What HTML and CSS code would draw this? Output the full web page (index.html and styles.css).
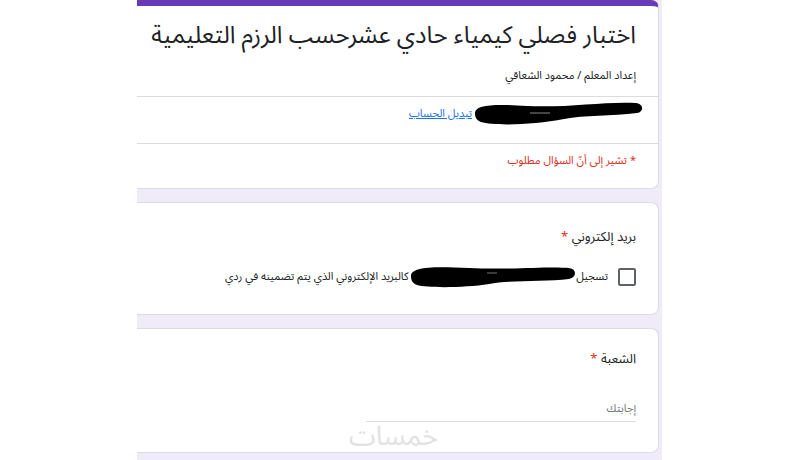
FILE: index.html
```html
<!DOCTYPE html>
<html lang="ar" dir="rtl">
<head>
<meta charset="utf-8">
<title>اختبار فصلي كيمياء حادي عشر</title>
<link rel="stylesheet" href="styles.css">
</head>
<body>
<div class="page">
  <div class="form">
    <section class="card card-top">
      <div class="header">
        <h1 class="title">اختبار فصلي كيمياء حادي عشرحسب الرزم التعليمية</h1>
        <p class="subtitle">إعداد المعلم / محمود الشعاقي</p>
      </div>
      <div class="account">
        <svg class="blob blob-account" viewBox="0 0 172 26" aria-hidden="true">
          <path d="M3,13 C3,4 25,4 55,6 C95,8 135,1 164,3 C172,4 172,12 165,13 C140,16 112,15 92,19 C62,25 22,26 9,22 C4,20 3,17 3,13 Z" fill="#000"/>
          <path d="M58,13 L78,13" stroke="#888" stroke-width="1"/>
        </svg>
        <a class="switch" href="#">تبديل الحساب</a>
      </div>
      <div class="required-note">* تشير إلى أنّ السؤال مطلوب</div>
    </section>

    <section class="card">
      <div class="q-title">بريد إلكتروني <span class="star">*</span></div>
      <label class="check-row">
        <span class="checkbox"></span>
        <span class="check-label">تسجيل <span class="blob-wrap"><svg class="blob blob-email" viewBox="0 0 168 24" aria-hidden="true">
          <path d="M2,12 C2,3 22,2 60,4 C100,6 140,2 160,4 C168,5 168,13 160,15 C135,18 100,16 80,20 C55,24 18,24 8,21 C3,19 2,16 2,12 Z" fill="#000"/>
          <path d="M78,9 L88,9" stroke="#777" stroke-width="1"/>
        </svg></span> كالبريد الإلكتروني الذي يتم تضمينه في ردي</span>
      </label>
    </section>

    <section class="card card-last">
      <div class="q-title">الشعبة <span class="star">*</span></div>
      <div class="answer">إجابتك</div>
      <div class="watermark">خمسات</div>
    </section>
  </div>
</div>
</body>
</html>
```

FILE: styles.css
```css
* { box-sizing: border-box; }

html, body {
  margin: 0;
  padding: 0;
  background: #ffffff;
}

body {
  font-family: "Noto Sans Arabic", "DejaVu Sans", "Liberation Sans", sans-serif;
  color: #202124;
  width: 800px;
  height: 460px;
  overflow: hidden;
}

.page {
  direction: ltr;
  display: flex;
  height: 460px;
}

.form {
  direction: rtl;
  margin-left: 137px;
  width: 525px;
  background: #f0ebf8;
  padding: 0 3px 0 0;
  display: flex;
  flex-direction: column;
  gap: 13px;
}

.card {
  position: relative;
  background: #ffffff;
  border: 1px solid #dadce0;
  border-left: none;
  border-radius: 0 8px 8px 0;
  padding: 25px 22px 28px 22px;
}

.card-top {
  border-top: 6px solid #673ab7;
  border-radius: 0 8px 8px 0;
  padding: 0;
}

.header {
  padding: 13px 22px 12px;
  border-bottom: 1px solid #dadce0;
}

.title {
  margin: 0;
  font-size: 24px;
  font-weight: normal;
  line-height: 34px;
  color: #202124;
  white-space: nowrap;
}

.subtitle {
  margin: 15px 0 0;
  font-size: 11px;
  line-height: 16px;
  color: #202124;
}

.account {
  height: 47px;
  padding: 3px 14px 0 22px;
  display: flex;
  align-items: flex-start;
  border-bottom: 1px solid #dadce0;
}

.blob-account {
  width: 172px;
  height: 26px;
  display: block;
}

.switch {
  font-size: 11px;
  line-height: 16px;
  margin-top: 6px;
  color: #1a73e8;
  text-decoration: underline;
}

.required-note {
  padding: 9px 22px 19px;
  font-size: 11px;
  line-height: 16px;
  color: #d93025;
}

.q-title {
  font-size: 13px;
  line-height: 18px;
  color: #202124;
}

.star {
  color: #d93025;
}

.check-row {
  display: flex;
  align-items: center;
  gap: 10px;
  margin-top: 22px;
}

.checkbox {
  width: 18px;
  height: 18px;
  border: 2px solid #5f6368;
  border-radius: 2px;
  flex: none;
}

.check-label {
  font-size: 11px;
  line-height: 16px;
  color: #202124;
  white-space: nowrap;
}

.blob-wrap {
  display: inline-block;
  width: 162px;
  height: 16px;
  position: relative;
  vertical-align: middle;
}

.blob-email {
  position: absolute;
  top: -5px;
  right: -5px;
  width: 170px;
  height: 24px;
}

.card-last {
  padding-top: 21px;
  padding-bottom: 30px;
}

.answer {
  margin-top: 33px;
  width: 270px;
  font-size: 11px;
  line-height: 16px;
  color: #70757a;
  padding-bottom: 4px;
  border-bottom: 1px solid #dadce0;
}

.watermark {
  position: absolute;
  left: 212px;
  bottom: 1px;
  font-size: 27px;
  line-height: 28px;
  color: #e2e2e2;
  font-weight: normal;
}
```
